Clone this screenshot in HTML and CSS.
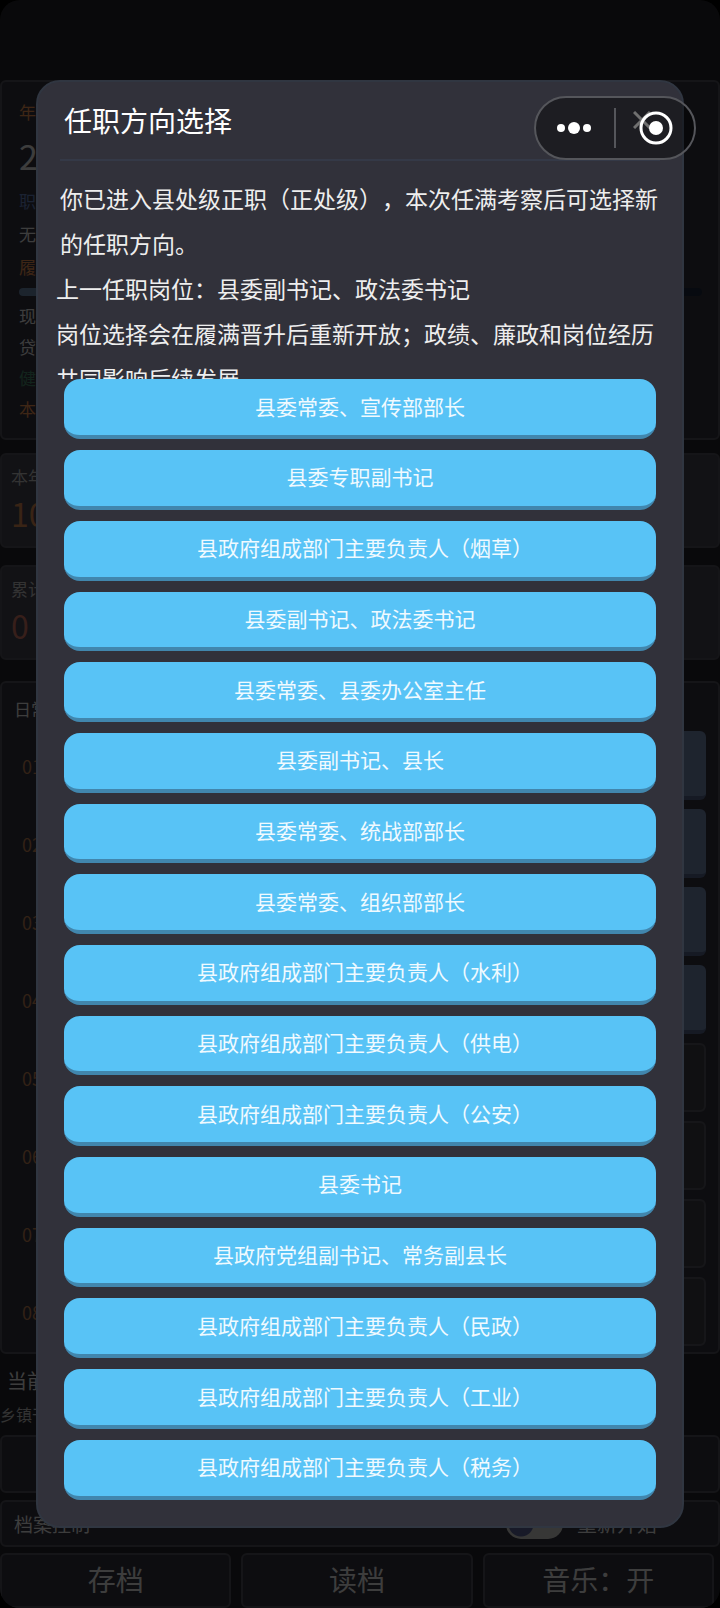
FILE: index.html
```html
<!DOCTYPE html>
<html lang="zh-CN">

<head>
    <meta charset="UTF-8">
    <meta name="viewport" content="width=device-width, initial-scale=1.0">
    <title>任职方向选择</title>
    <link rel="stylesheet" href="styles.css">
</head>

<body>
    <div class="page">
        <section class="card profile">
            <span class="row orange">年</span>
            <span class="age">2</span>
            <span class="row blue">职</span>
            <span class="row">无</span>
            <span class="row orange">履</span>
            <div class="progress"><div class="progress_fill"></div></div>
            <span class="detail">现</span>
            <span class="detail">贷</span>
            <span class="detail green">健</span>
            <span class="detail orange">本</span>
        </section>

        <section class="card stat">
            <span class="stat_label">本年</span>
            <span class="stat_value">10</span>
        </section>
        <section class="card stat">
            <span class="stat_label">累计</span>
            <span class="stat_value red">0</span>
        </section>

        <section class="card daily">
            <h2>日常</h2>
            <ol class="tasks">
                <li><span>01</span><button class="primary" aria-label="执行 01"></button></li>
                <li><span>02</span><button class="primary" aria-label="执行 02"></button></li>
                <li><span>03</span><button class="primary" aria-label="执行 03"></button></li>
                <li><span>04</span><button class="primary" aria-label="执行 04"></button></li>
                <li><span>05</span><button aria-label="执行 05"></button></li>
                <li><span>06</span><button aria-label="执行 06"></button></li>
                <li><span>07</span><button aria-label="执行 07"></button></li>
                <li><span>08</span><button aria-label="执行 08"></button></li>
            </ol>
        </section>

        <section class="current">
            <h2>当前</h2>
            <p>乡镇干</p>
            <div class="card current_box"></div>
        </section>

        <section class="card archive">
            <span class="archive_title">档案控制</span>
            <input type="checkbox" class="switch" id="restart">
            <label for="restart">重新开始</label>
        </section>
        <div class="archive_buttons">
            <button>存档</button>
            <button>读档</button>
            <button>音乐：开</button>
        </div>
    </div>

    <div class="overlay">
        <div class="modal" role="dialog" aria-labelledby="modal_title">
            <header class="modal_header">
                <h1 id="modal_title">任职方向选择</h1>
                <button class="close" aria-label="关闭">
                    <svg width="18" height="18" viewBox="0 0 18 18" fill="none" stroke="currentColor" stroke-width="3">
                        <path d="M1 1L17 17M17 1L1 17" />
                    </svg>
                </button>
            </header>
            <div class="message">
                <p class="intro">你已进入县处级正职（正处级），本次任满考察后可选择新的任职方向。</p>
                <p>上一任职岗位：县委副书记、政法委书记</p>
                <p>岗位选择会在履满晋升后重新开放；政绩、廉政和岗位经历共同影响后续发展</p>
            </div>
            <div class="options">
                <button>县委常委、宣传部部长</button>
                <button>县委专职副书记</button>
                <button class="bracket">县政府组成部门主要负责人（烟草）</button>
                <button>县委副书记、政法委书记</button>
                <button>县委常委、县委办公室主任</button>
                <button>县委副书记、县长</button>
                <button>县委常委、统战部部长</button>
                <button>县委常委、组织部部长</button>
                <button class="bracket">县政府组成部门主要负责人（水利）</button>
                <button class="bracket">县政府组成部门主要负责人（供电）</button>
                <button class="bracket">县政府组成部门主要负责人（公安）</button>
                <button>县委书记</button>
                <button>县政府党组副书记、常务副县长</button>
                <button class="bracket">县政府组成部门主要负责人（民政）</button>
                <button class="bracket">县政府组成部门主要负责人（工业）</button>
                <button class="bracket">县政府组成部门主要负责人（税务）</button>
            </div>
        </div>
    </div>

    <!-- 小程序胶囊按钮 -->
    <div class="capsule">
        <button aria-label="更多">
            <svg width="36" height="36" viewBox="0 0 36 36" fill="currentColor">
                <circle cx="4" cy="18" r="4" />
                <circle cx="17" cy="18" r="6" />
                <circle cx="30" cy="18" r="4" />
            </svg>
        </button>
        <span class="capsule_line"></span>
        <button aria-label="退出">
            <svg width="36" height="36" viewBox="0 0 36 36">
                <circle cx="19" cy="18" r="15" fill="none" stroke="currentColor" stroke-width="3" />
                <circle cx="19" cy="18" r="7" fill="currentColor" />
            </svg>
        </button>
    </div>
</body>

</html>
```
FILE: styles.css
```css
* {
    box-sizing: border-box;
}

body {
    margin: 0;
    background: #000;
    color: #ccc;
    font-family: "Noto Sans CJK SC", sans-serif;
    text-spacing-trim: space-all;
}

h1,
h2,
p,
ol {
    margin: 0;
    padding: 0;
    font-weight: 400;
}

button {
    font: inherit;
    color: inherit;
    padding: 0;
    cursor: pointer;
}

/* 主页面 */
.page {
    min-height: 100vh;
    padding-top: 80px;
    background: #202026;
    border-radius: 20px;
    overflow: hidden;
}

.card {
    background: #2d2d38;
    border: 2px solid #484850;
    border-radius: 6px;
}

.profile {
    display: flex;
    flex-direction: column;
    height: 360px;
    padding: 13px 16px 0 17px;
    font-size: 17px;
}

.row {
    line-height: 33px;
}

.detail {
    line-height: 31px;
}

.age {
    font-size: 34px;
    line-height: 56px;
}

.orange {
    color: #d08048;
}

.blue {
    color: #5a74a8;
}

.green {
    color: #3f7a60;
}

.red {
    color: #b86858;
}

.progress {
    height: 8px;
    margin: 5px 0 4px;
    border-radius: 4px;
    background: #182436;
}

.progress_fill {
    width: 60%;
    height: 8px;
    border-radius: 4px;
    background: #5f7898;
}

.stat {
    display: flex;
    flex-direction: column;
    height: 95px;
    margin-top: 13px;
    padding: 8px 9px;
    background: #3c3c48;
}

.stat + .stat {
    margin-top: 17px;
}

.stat_label {
    font-size: 17px;
    line-height: 28px;
    color: #aaa;
}

.stat_value {
    font-size: 32px;
    line-height: 44px;
    color: #c07848;
}

.stat_value.red {
    color: #b86858;
}

.daily {
    height: 673px;
    margin-top: 21px;
    padding: 12px 12px 0;
}

.daily h2 {
    font-size: 17px;
    line-height: 28px;
}

.tasks {
    display: grid;
    gap: 9px;
    margin-top: 8px;
    list-style: none;
}

.tasks li {
    display: flex;
    justify-content: space-between;
    align-items: center;
    height: 69px;
    padding-left: 8px;
    font-size: 18px;
    color: #a87048;
}

.tasks button {
    width: 120px;
    height: 69px;
    background: #38383f;
    border: 2px solid #4c4c54;
    border-radius: 6px;
}

.tasks .primary {
    background: #64789c;
    border: none;
    border-bottom: 4px solid #4a5878;
}

.current h2 {
    padding: 12px 7px 0;
    font-size: 20px;
    line-height: 30px;
}

.current p {
    font-size: 16px;
    line-height: 36px;
    color: #aaa;
}

.current_box {
    height: 58px;
    margin-top: 3px;
}

.archive {
    display: flex;
    align-items: center;
    height: 47px;
    margin-top: 7px;
    padding: 0 61px 0 12px;
    font-size: 20px;
    line-height: 28px;
}

.archive_title {
    margin-right: auto;
    font-size: 19px;
}

.switch {
    appearance: none;
    width: 57px;
    height: 30px;
    margin: 0 14px 0 0;
    border-radius: 15px;
    background: radial-gradient(circle at 15px 15px, #505888 12px, #b8b8b4 13px);
}

.archive_buttons {
    display: grid;
    grid-template-columns: repeat(3, 1fr);
    gap: 10px;
    margin-top: 6px;
    padding-right: 6px;
}

.archive_buttons button {
    height: 55px;
    padding-bottom: 4px;
    font-size: 28px;
    background: #2d2d38;
    border: 2px solid #484850;
    border-radius: 6px;
}

/* 弹窗 */
.overlay {
    position: fixed;
    inset: 0;
    display: flex;
    justify-content: center;
    align-items: center;
    background: rgba(0, 0, 0, 0.7);
}

.modal {
    display: flex;
    flex-direction: column;
    width: 90vw;
    height: 90vh;
    padding: 0 18px 26px;
    background: #31313a;
    border: 2px solid #303641;
    border-radius: 24px;
    color: #eee;
}

.modal_header {
    display: flex;
    justify-content: space-between;
    align-items: flex-start;
    height: 79px;
    margin: 0 4px;
    padding: 18px 9px 0 4px;
    border-bottom: 2px solid #343947;
    color: #fff;
}

.modal_header h1 {
    font-size: 28px;
    line-height: 40px;
}

.close {
    display: flex;
    margin-top: 11px;
    background: none;
    border: none;
    color: #bbb;
}

.message {
    height: 203px;
    margin-top: 15px;
    font-size: 23px;
    line-height: 45px;
    overflow: hidden;
    flex: none;
}

.intro {
    padding-left: 4px;
}

.options {
    flex: 1;
    display: grid;
    grid-auto-rows: 1fr;
    gap: 11px;
    padding: 0 8px;
}

.options button {
    padding-bottom: 3px;
    background: #58c3f6;
    border: none;
    border-bottom: 4px solid #4186ad;
    border-radius: 16px;
    color: #f0faff;
    font-size: 21px;
    line-height: 32px;
}

/* 抵消右括号的半格空白 */
.options .bracket {
    padding-left: 10px;
}

/* 右上角胶囊 */
.capsule {
    position: fixed;
    top: 96px;
    right: 24px;
    display: flex;
    align-items: center;
    width: 162px;
    height: 64px;
    background: rgba(0, 0, 0, 0.4);
    border: 2px solid #55565b;
    border-radius: 32px;
    color: #fff;
}

.capsule button {
    flex: 1;
    display: flex;
    justify-content: center;
    background: none;
    border: none;
    color: #fff;
}

.capsule_line {
    width: 2px;
    height: 40px;
    background: #55565b;
}
```
